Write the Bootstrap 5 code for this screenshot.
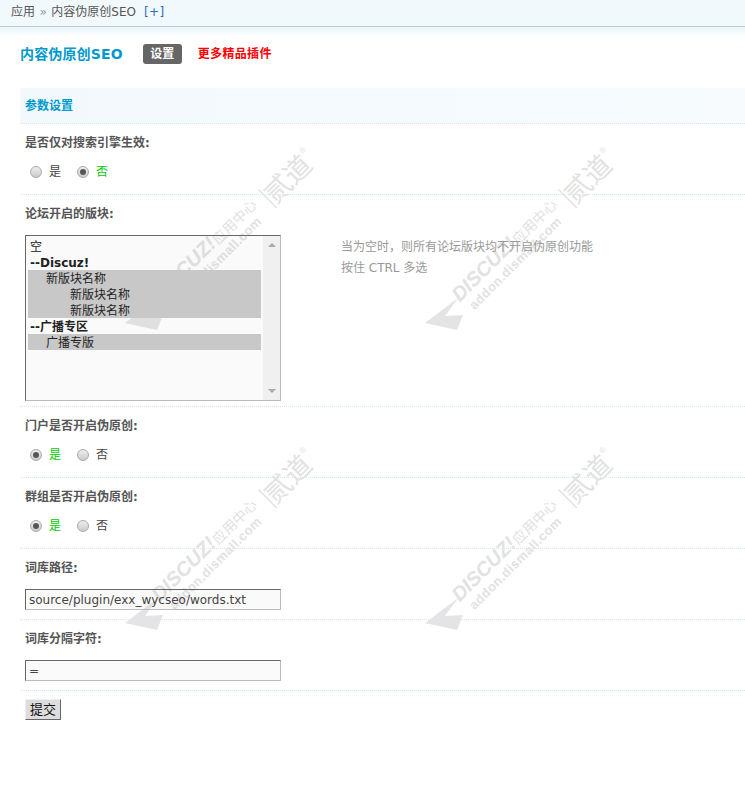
<!DOCTYPE html>
<html lang="en">
<head>
  <meta charset="UTF-8">
  <meta name="viewport" content="width=device-width, initial-scale=1">
  <title>内容伪原创SEO</title>
  <link href="https://cdn.jsdelivr.net/npm/bootstrap@5.3.3/dist/css/bootstrap.min.css" rel="stylesheet">
  <style>
    body {
      font: 12px/16px "DejaVu Sans", "Noto Sans CJK SC", sans-serif;
      color: #444;
      background: #fff;
      position: relative;
      min-height: 789px;
      overflow-x: hidden;
    }
    .wm-layer {
      position: absolute;
      left: 0;
      top: 0;
      width: 745px;
      height: 789px;
      pointer-events: none;
    }
    .wm-layer text { font-family: "Liberation Sans", "Noto Sans CJK SC", sans-serif; fill: #e2e2e2; }
    .crumb-bar {
      height: 27px;
      background: #f2f9fd;
      border-bottom: 1px solid #b5d0de;
      padding-left: 11px;
      line-height: 25px;
      color: #555;
      position: relative;
    }
    .crumb-sep { color: #8a9bb0; margin: 0 4.5px; }
    .crumb-add { color: #2b6cb8; margin-left: 8px; letter-spacing: .4px; }
    .crumb-glow { height: 9px; background: linear-gradient(#e9f3f9, #fff); position: relative; }
    .plugin-wrap { position: relative; padding-left: 20px; }
    .plugin-head { height: 52px; padding-top: 8px; }
    .plugin-title { font-size: 14px; font-weight: 700; color: #09c; line-height: 20px; letter-spacing: .15px; }
    .plugin-tab {
      background: #666;
      color: #fff;
      font-weight: 700;
      border-radius: 3px;
      height: 20px;
      line-height: 20px;
      width: 39px;
      text-align: center;
      margin-left: 20px;
    }
    .plugin-more { color: #f00; font-weight: 700; margin-left: 16px; line-height: 20px; letter-spacing: .33px; }
    .section-bar {
      height: 36px;
      line-height: 37px;
      padding-left: 5px;
      font-weight: 700;
      color: #09c;
      background: linear-gradient(90deg, #f2f9fd, #f7fbfe);
      border-bottom: 1px dotted #cfe8f3;
    }
    .set-row { border-bottom: 1px dotted #cfe8f3; padding-left: 5px; height: 71px; }
    .set-row.tall { height: 212px; }
    .set-label { font-weight: 700; color: #555; padding-top: 11px; height: 40px; }
    .opt-line { padding-left: 5px; gap: 16px; }
    .opt-item { gap: 7px; color: #444; }
    .opt-item.is-on { color: #0c0; }
    .radio-mark {
      width: 12px;
      height: 12px;
      border-radius: 50%;
      border: 1px solid #aaa;
      background: linear-gradient(#eee, #ccc);
      position: relative;
      flex: none;
    }
    .is-on .radio-mark::after {
      content: "";
      position: absolute;
      left: 2px;
      top: 2px;
      width: 6px;
      height: 6px;
      border-radius: 50%;
      background: #555;
    }
    .list-box {
      width: 256px;
      height: 166px;
      border: 1px solid;
      border-color: #666 #bbb #bbb #666;
      background: rgba(120, 120, 120, .04);
      padding: 2px 0 0 2px;
      color: #222;
      position: relative;
    }
    .list-opt { height: 16px; width: 233px; padding-left: 2px; line-height: 18px; white-space: nowrap; }
    .list-opt.is-sel { background: #c8c8c8; }
    .list-opt.is-grp { font-weight: 700; }
    .list-opt.ind1 { padding-left: 18px; }
    .list-opt.ind2 { padding-left: 42px; }
    .list-scroll {
      position: absolute;
      right: 0;
      top: 0;
      bottom: 0;
      width: 17px;
      background: rgba(200, 200, 200, .2);
    }
    .list-scroll::before, .list-scroll::after {
      content: "";
      position: absolute;
      left: 5px;
      border-left: 4px solid transparent;
      border-right: 4px solid transparent;
    }
    .list-scroll::before { top: 7px; border-bottom: 4px solid #aaa; }
    .list-scroll::after { bottom: 7px; border-top: 4px solid #aaa; }
    .hint-text { margin-left: 60px; line-height: 21px; color: #999; margin-top: 2px; }
    .text-box {
      width: 256px;
      height: 21px;
      border: 1px solid;
      border-color: #666 #bbb #bbb #666;
      background: rgba(120, 120, 120, .04);
      padding: 0 3px;
      color: #444;
      font: inherit;
      display: block;
      border-radius: 0;
      outline: 0;
    }
    .submit-btn {
      width: 36px;
      height: 21px;
      margin: 8px 0 0 5px;
      padding: 0;
      border: 1px solid;
      border-color: #eee #666 #666 #eee;
      background: #ddd;
      color: #111;
      font: inherit;
      font-size: 13px;
      display: block;
    }
  </style>
</head>
<body>

<!-- Watermark tiles -->
<svg class="wm-layer" viewBox="0 0 745 789" aria-hidden="true">
  <defs>
    <g id="wm-tile">
      <g transform="rotate(-45)">
        <text x="39" y="10" font-size="20" font-weight="700" font-style="italic">DISCUZ!</text>
        <text x="121" y="11" font-size="14">应用中心</text>
        <rect x="188" y="0" width="1.5" height="26" fill="#e2e2e2"></rect>
        <text x="190" y="23" font-size="27">贰道</text>
        <text x="245" y="6" font-size="8">®</text>
        <text x="44" y="26" font-size="13" font-weight="700" letter-spacing=".4">addon.dismall.com</text>
      </g>
      <polygon points="0,0 33,-25 20,-7 38,-8 32,7" fill="#e4e4e4"></polygon>
    </g>
  </defs>
  <use href="#wm-tile" x="125" y="323"></use>
  <use href="#wm-tile" x="425" y="323"></use>
  <use href="#wm-tile" x="125" y="623"></use>
  <use href="#wm-tile" x="425" y="623"></use>
</svg>

<!-- Breadcrumb -->
<div class="crumb-bar">应用<span class="crumb-sep">»</span>内容伪原创SEO<span class="crumb-add">[+]</span></div>
<div class="crumb-glow"></div>

<div class="plugin-wrap">
  <div class="plugin-head d-flex align-items-start">
    <span class="plugin-title">内容伪原创SEO</span>
    <span class="plugin-tab">设置</span>
    <span class="plugin-more">更多精品插件</span>
  </div>

  <div class="section-bar">参数设置</div>

  <div class="set-row">
    <div class="set-label">是否仅对搜索引擎生效:</div>
    <div class="opt-line d-flex">
      <label class="opt-item d-flex align-items-center"><span class="radio-mark"></span>是</label>
      <label class="opt-item is-on d-flex align-items-center"><span class="radio-mark"></span>否</label>
    </div>
  </div>

  <div class="set-row tall">
    <div class="set-label">论坛开启的版块:</div>
    <div class="d-flex">
      <div class="list-box">
        <div class="list-opt">空</div>
        <div class="list-opt is-grp">--Discuz!</div>
        <div class="list-opt ind1 is-sel">新版块名称</div>
        <div class="list-opt ind2 is-sel">新版块名称</div>
        <div class="list-opt ind2 is-sel">新版块名称</div>
        <div class="list-opt is-grp">--广播专区</div>
        <div class="list-opt ind1 is-sel">广播专版</div>
        <div class="list-scroll"></div>
      </div>
      <div class="hint-text">当为空时，则所有论坛版块均不开启伪原创功能<br>按住 CTRL 多选</div>
    </div>
  </div>

  <div class="set-row">
    <div class="set-label">门户是否开启伪原创:</div>
    <div class="opt-line d-flex">
      <label class="opt-item is-on d-flex align-items-center"><span class="radio-mark"></span>是</label>
      <label class="opt-item d-flex align-items-center"><span class="radio-mark"></span>否</label>
    </div>
  </div>

  <div class="set-row">
    <div class="set-label">群组是否开启伪原创:</div>
    <div class="opt-line d-flex">
      <label class="opt-item is-on d-flex align-items-center"><span class="radio-mark"></span>是</label>
      <label class="opt-item d-flex align-items-center"><span class="radio-mark"></span>否</label>
    </div>
  </div>

  <div class="set-row">
    <div class="set-label">词库路径:</div>
    <input class="text-box" type="text" value="source/plugin/exx_wycseo/words.txt">
  </div>

  <div class="set-row">
    <div class="set-label">词库分隔字符:</div>
    <input class="text-box" type="text" value="=">
  </div>

  <button class="submit-btn" type="button">提交</button>
</div>

<script src="https://cdn.jsdelivr.net/npm/bootstrap@5.3.3/dist/js/bootstrap.bundle.min.js"></script>
</body>
</html>
